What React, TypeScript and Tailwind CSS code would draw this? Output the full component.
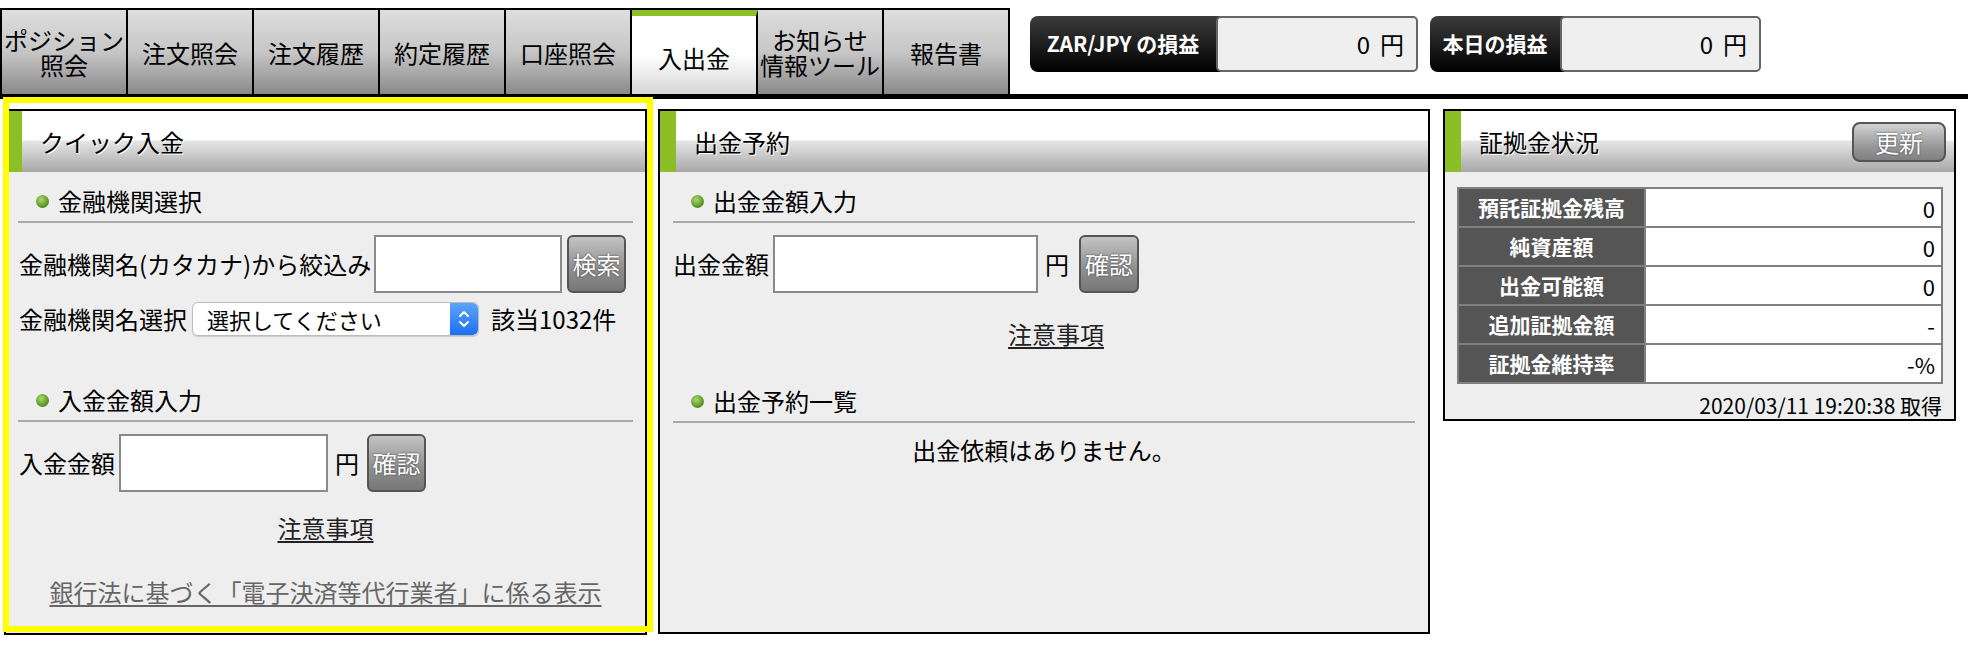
import type { ReactNode } from 'react';

const tabs = [
  { label: 'ポジション\n照会' },
  { label: '注文照会' },
  { label: '注文履歴' },
  { label: '約定履歴' },
  { label: '口座照会' },
  { label: '入出金', active: true },
  { label: 'お知らせ\n情報ツール' },
  { label: '報告書' },
];

const marginRows = [
  ['預託証拠金残高', '0'],
  ['純資産額', '0'],
  ['出金可能額', '0'],
  ['追加証拠金額', '-'],
  ['証拠金維持率', '-%'],
];

const PanelHeader = ({ title, children }: { title: string; children?: ReactNode }) => (
  <div className="flex h-[61px] items-center bg-[linear-gradient(to_bottom,#ffffff_0%,#ffffff_47%,#e4e4e4_50%,#a8a8a8_100%)]">
    <div className="h-full w-[16px] bg-[#8cbf26]" />
    <div className="ml-[18px] flex-1 text-[24px] leading-[30px] text-black [text-shadow:1px_1px_0_#ffffff]">
      {title}
    </div>
    {children}
  </div>
);

const SectionTitle = ({ children, className = '' }: { children: ReactNode; className?: string }) => (
  <div className={`flex items-center border-b-2 border-[#aaaaaa] pb-[5px] pl-[18px] text-[24px] leading-[30px] ${className}`}>
    <span className="mr-[9px] h-[13px] w-[13px] rounded-full bg-[radial-gradient(circle_at_40%_35%,#a9d86e,#4c8a17_75%)]" />
    {children}
  </div>
);

const GrayButton = ({ label, className = '' }: { label: string; className?: string }) => (
  <button className={`flex items-center justify-center rounded-[6px] border-2 border-[#555555] bg-[linear-gradient(to_bottom,#c4c4c4,#8e8e8e_60%,#777777)] text-[24px] leading-none text-white [text-shadow:0_0_2px_#333333] ${className}`}>
    {label}
  </button>
);

const PnlBox = ({ label, labelW, valueW }: { label: string; labelW: string; valueW: string }) => (
  <div className="flex h-[56px] items-stretch rounded-[8px] bg-[linear-gradient(to_bottom,#3c3c3c,#000000)]">
    <div className={`flex items-center justify-center px-[8px] text-[21px] font-semibold text-white ${labelW}`}>
      {label}
    </div>
    <div className={`flex items-center justify-end gap-[10px] rounded-[5px] border-2 border-[#666666] bg-[#efefef] pr-[12px] text-[24px] leading-none text-black ${valueW}`}>
      <span>0</span>
      <span>円</span>
    </div>
  </div>
);

export default function App() {
  return (
    <div className="h-[646px] w-[1968px] overflow-hidden bg-white font-['Noto_Sans_CJK_JP','Noto_Sans',sans-serif] text-black">
      {/* Top: tabs + P/L boxes */}
      <div className="flex h-[94px] items-start">
        <div className="mt-[8px] flex h-[86px] border-l-2 border-t-2 border-black">
          {tabs.map((t) => (
            <div
              key={t.label}
              className={`flex w-[126px] items-center justify-center border-r-2 border-black text-[24px] ${
                t.active
                  ? 'border-t-[6px] border-t-[#8cbf26] bg-[linear-gradient(to_bottom,#ffffff_0%,#ffffff_50%,#d6d6d6_100%)] pt-[4px]'
                  : 'bg-[linear-gradient(to_bottom,#dedede_0%,#c6c6c6_50%,#8a8a8a_100%)]'
              }`}
            >
              <span className="whitespace-pre-line text-center leading-[25px]">{t.label}</span>
            </div>
          ))}
        </div>
        <div className="ml-[20px] mt-[16px] flex gap-[12px]">
          <PnlBox label="ZAR/JPY の損益" labelW="w-[186px]" valueW="w-[202px]" />
          <PnlBox label="本日の損益" labelW="w-[130px]" valueW="w-[201px]" />
        </div>
      </div>
      <div className="h-[5px] bg-black" />

      {/* Panels */}
      <div className="mt-[10px] flex items-start pl-[4px]">
        {/* Quick deposit */}
        <div className="relative">
          <div className="h-[526px] w-[643px] border-2 border-black bg-[#eeeeee]">
            <PanelHeader title="クイック入金" />
            <div className="px-[12px]">
              <SectionTitle className="mt-[14px]">金融機関選択</SectionTitle>
              <div className="mt-[12px] flex items-center">
                <span className="pl-[1px] text-[24px] leading-[30px]">金融機関名(カタカナ)から絞込み</span>
                <input className="ml-auto h-[58px] w-[188px] border-2 border-[#8a8a8a] bg-white outline-none" />
                <GrayButton label="検索" className="ml-[5px] mr-[7px] h-[58px] w-[59px]" />
              </div>
              <div className="mt-[9px] flex items-center">
                <span className="pl-[1px] text-[24px] leading-[30px]">金融機関名選択</span>
                <div className="ml-[5px] flex h-[34px] w-[287px] items-stretch overflow-hidden rounded-[6px] border border-[#bdbdbd] bg-white shadow-[0_1px_1px_rgba(0,0,0,0.15)]">
                  <span className="flex flex-1 items-center pl-[14px] text-[22px] leading-none">選択してください</span>
                  <span className="flex w-[28px] items-center justify-center rounded-r-[5px] bg-[linear-gradient(to_bottom,#5ea3fa,#1c6ff2)]">
                    <svg width="12" height="20" viewBox="0 0 12 20" fill="none" stroke="#ffffff" strokeWidth="2" strokeLinecap="round" strokeLinejoin="round">
                      <path d="M2 7 L6 3 L10 7" />
                      <path d="M2 13 L6 17 L10 13" />
                    </svg>
                  </span>
                </div>
                <span className="ml-[12px] text-[24px] leading-[30px]">該当1032件</span>
              </div>

              <SectionTitle className="mt-[49px]">入金金額入力</SectionTitle>
              <div className="mt-[12px] flex items-center">
                <span className="pl-[1px] text-[24px] leading-[30px]">入金金額</span>
                <input className="ml-[4px] h-[58px] w-[209px] border-2 border-[#8a8a8a] bg-white outline-none" />
                <span className="ml-[7px] text-[24px] leading-[30px]">円</span>
                <GrayButton label="確認" className="ml-[8px] h-[58px] w-[59px]" />
              </div>
              <div className="mt-[21px] text-center text-[24px] leading-[30px]">
                <a className="text-[#222222] underline underline-offset-[3px]">注意事項</a>
              </div>
              <div className="mt-[34px] text-center text-[24px] leading-[30px]">
                <a className="text-[#666666] underline underline-offset-[3px]">銀行法に基づく「電子決済等代行業者」に係る表示</a>
              </div>
            </div>
          </div>
          {/* highlight frame */}
          <div className="pointer-events-none absolute -left-[1px] -right-[6px] -top-[12px] bottom-[3px] border-[6px] border-[#ffff00]" />
        </div>

        {/* Withdrawal reservation */}
        <div className="ml-[11px] h-[525px] w-[772px] border-2 border-black bg-[#eeeeee]">
          <PanelHeader title="出金予約" />
          <div className="px-[13px]">
            <SectionTitle className="mt-[14px]">出金金額入力</SectionTitle>
            <div className="mt-[12px] flex items-center">
              <span className="text-[24px] leading-[30px]">出金金額</span>
              <input className="ml-[4px] h-[58px] w-[265px] border-2 border-[#8a8a8a] bg-white outline-none" />
              <span className="ml-[7px] text-[24px] leading-[30px]">円</span>
              <GrayButton label="確認" className="ml-[10px] h-[58px] w-[60px]" />
            </div>
            <div className="mt-[26px] pl-[24px] text-center text-[24px] leading-[30px]">
              <a className="text-[#222222] underline underline-offset-[3px]">注意事項</a>
            </div>
            <SectionTitle className="mt-[37px]">出金予約一覧</SectionTitle>
            <div className="mt-[12px] text-center text-[24px] leading-[30px]">出金依頼はありません。</div>
          </div>
        </div>

        {/* Margin status */}
        <div className="ml-[13px] h-[312px] w-[513px] border-2 border-black bg-[#eeeeee]">
          <PanelHeader title="証拠金状況">
            <GrayButton label="更新" className="mr-[8px] h-[40px] w-[94px] rounded-[8px] bg-[linear-gradient(to_bottom,#d2d2d2,#9a9a9a_60%,#808080)]" />
          </PanelHeader>
          <table className="ml-[12px] mt-[15px] w-[486px] border-collapse border-2 border-[#808080]">
            <tbody>
              {marginRows.map(([k, v]) => (
                <tr key={k} className="h-[39px]">
                  <th className="w-[187px] border-2 border-[#808080] bg-[#555555] text-center text-[21px] font-bold leading-none text-white">
                    {k}
                  </th>
                  <td className="border-2 border-[#808080] bg-white pr-[6px] text-right text-[22px] leading-none">{v}</td>
                </tr>
              ))}
            </tbody>
          </table>
          <div className="mr-[12px] mt-[8px] text-right text-[21px] leading-[26px]">2020/03/11 19:20:38 取得</div>
        </div>
      </div>
    </div>
  );
}
